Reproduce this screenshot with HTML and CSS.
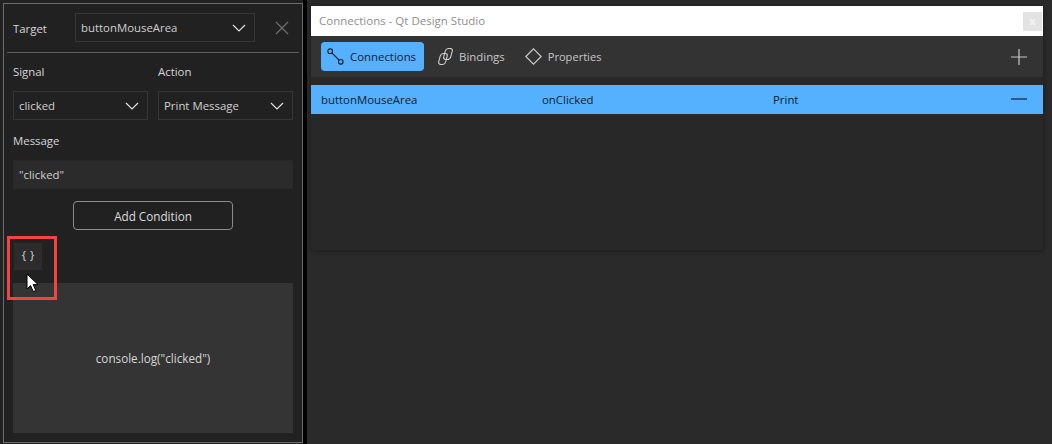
FILE: index.html
```html
<!DOCTYPE html>
<html lang="en">
<head>
<meta charset="utf-8">
<title>Connections - Qt Design Studio</title>
<link rel="stylesheet" href="styles.css">
</head>
<body>
<div class="stage">
  <aside class="side">
    <div class="panel">
      <div class="target-row">
        <span class="target-label">Target</span>
        <div class="select pick target-select"><span>buttonMouseArea</span>
          <svg class="chev" viewBox="0 0 14 8"><path d="M1 1l6 6 6-6"/></svg></div>
        <svg class="close" viewBox="0 0 14 14"><path d="M1 1l12 12M13 1L1 13"/></svg>
      </div>
      <div class="form">
        <div class="two">
          <div class="field">
            <div class="label">Signal</div>
            <div class="select pick"><span>clicked</span><svg class="chev" viewBox="0 0 14 8"><path d="M1 1l6 6 6-6"/></svg></div>
          </div>
          <div class="field">
            <div class="label">Action</div>
            <div class="select pick"><span>Print Message</span><svg class="chev" viewBox="0 0 14 8"><path d="M1 1l6 6 6-6"/></svg></div>
          </div>
        </div>
        <div class="label message-label">Message</div>
        <div class="input">"clicked"</div>
        <div class="btn-row"><div class="add-btn">Add Condition</div></div>
        <div class="code-btn">{ }</div>
        <div class="code">console.log("clicked")</div>
      </div>
    </div>
    <div class="highlight"></div>
    <svg class="cursor" viewBox="0 0 13 20"><path d="M1 1v15l3.6-3.4 2.6 6 2.6-1.1-2.6-5.9H12z"/></svg>
  </aside>
  <main class="right">
    <section class="window">
      <header class="titlebar">
        <span class="title">Connections - Qt Design Studio</span>
        <div class="win-close">x</div>
      </header>
      <nav class="toolbar">
        <div class="tab active">
          <svg class="tab-icon" viewBox="0 0 17 17"><circle cx="3.2" cy="3.2" r="2.3"/><circle cx="13.8" cy="13.8" r="2.3"/><path d="M5 5l7 7"/></svg>
          <span>Connections</span>
        </div>
        <div class="tab bindings">
          <svg class="tab-icon" viewBox="0 0 17 17"><rect x="5.400" y="5.500" width="7" height="11" rx="2.800" transform="skewX(-15)"/><rect x="9.100" y=".5" width="7" height="11" rx="2.800" transform="skewX(-15)"/></svg>
          <span>Bindings</span>
        </div>
        <div class="tab">
          <svg class="tab-icon" viewBox="0 0 17 17"><path d="M8.500 .8 16.200 8.500 8.500 16.200 .8 8.500z"/></svg>
          <span class="tight">Properties</span>
        </div>
        <svg class="plus" viewBox="0 0 16 16"><path d="M8 0v16M0 8h16"/></svg>
      </nav>
      <div class="list">
        <div class="row">
          <span>buttonMouseArea</span>
          <span>onClicked</span>
          <span>Print</span>
          <svg class="minus" viewBox="0 0 16 2"><path d="M0 1h16"/></svg>
        </div>
      </div>
    </section>
  </main>
</div>
</body>
</html>
```

FILE: styles.css
```css
* { box-sizing: border-box; }
html, body { margin: 0; height: 100%; overflow: hidden; }
body {
  background: #2a2a2a;
  font-family: "Open Sans", "Noto Sans", "Liberation Sans", sans-serif;
  font-size: 11.4px;
  line-height: 16px;
  color: #d6d6d6;
}
.stage { display: flex; width: 1052px; height: 444px; }

.side {
  position: relative;
  flex: 0 0 307px;
  padding: 3px 0 1px 3px;
  background: #222;
  border-right: 4px solid #000;
}
.panel {
  height: 440px;
  width: 300px;
  background: #212121;
  border: 1px solid #6b6b6b;
}
.target-row {
  display: flex;
  align-items: center;
  height: 49px;
  margin: 0 3px;
  padding: 0 0 1px 6px;
  border-bottom: 1px solid #5c5c5c;
}
.target-label { width: 62px; padding-top: 2px; }
.select {
  display: flex;
  align-items: center;
  justify-content: space-between;
  height: 29px;
  padding: 0 8px 0 5px;
  border: 1px solid #363636;
  color: #d0d0d0;
}
.target-select { width: 180px; }
.pick { padding-top: 1px; }
.chev { width: 14px; height: 8px; fill: none; stroke: #e0e0e0; stroke-width: 1.2; }
.close { width: 14px; height: 14px; margin-left: 20px; fill: none; stroke: #6e6e6e; stroke-width: 1.2; }

.form { padding: 0 9px; }
.two { display: flex; gap: 10px; }
.field { flex: 0 0 135px; }
.label { height: 38px; padding-top: 11px; }
.message-label { height: 40px; padding-top: 13px; }
.input {
  height: 29px;
  padding: 6px 5px;
  background: #2b2b2b;
  color: #d0d0d0;
  border: 1px solid #282828;
}
.btn-row { display: flex; justify-content: center; margin-top: 12px; }
.add-btn {
  width: 160px;
  height: 29px;
  padding-top: 6px;
  font-size: 11.7px;
  text-align: center;
  border: 1px solid #8c8c8c;
  border-radius: 4px;
  color: #dcdcdc;
}
.code-btn {
  width: 28px;
  height: 27px;
  margin: 13px 0 13px 1px;
  line-height: 24px;
  text-align: center;
  background: #2c2c2c;
  color: #d8d8d8;
  font-size: 11.5px;
  word-spacing: 1px;
}
.code {
  display: flex;
  align-items: center;
  justify-content: center;
  height: 150px;
  background: #343434;
  color: #d6d6d6;
  font-size: 11.7px;
}
.highlight {
  position: absolute;
  left: 7px;
  top: 236px;
  width: 50px;
  height: 64px;
  border: 3px solid #f44343;
}
.cursor {
  position: absolute;
  left: 26px;
  top: 273px;
  width: 13px;
  height: 20px;
  fill: #fff;
  stroke: #000;
  stroke-width: 1;
}

.right { flex: 1; padding: 6px 9px 0 4px; }
.window {
  height: 244px;
  background: #282828;
  box-shadow: 0 1px 5px rgba(0, 0, 0, .35);
}
.titlebar {
  display: flex;
  align-items: center;
  justify-content: space-between;
  height: 30px;
  padding: 0 1px 0 8px;
  background: #fff;
}
.title { color: #8f8f8f; font-size: 11.5px; }
.win-close {
  width: 19px;
  height: 19px;
  line-height: 17px;
  text-align: center;
  background: #e3e3e3;
  color: #f4f4f4;
  font-weight: 700;
  font-size: 11px;
}
.toolbar {
  display: flex;
  align-items: center;
  height: 41px;
  padding: 0 16px 0 10px;
  background: #333;
}
.tab {
  display: flex;
  align-items: center;
  gap: 6px;
  height: 29px;
  padding: 1px 6px 0;
  margin-right: 7px;
  margin-top: -1px;
  border-radius: 4px;
  color: #c6c6c6;
}
.tab.active { padding: 1px 8px 0 6px; background: #55b1fd; color: #102030; }
.tab.bindings { gap: 5px; margin-right: 8px; }
.tight { font-size: 11.1px; }
.tab-icon { width: 17px; height: 17px; fill: none; stroke: #d0d0d0; stroke-width: 1.1; margin-top: -1px; }
.tab.active .tab-icon { stroke: #0f2030; }
.plus { width: 16px; height: 16px; margin-left: auto; stroke: #c8c8c8; stroke-width: 1.2; }
.list { padding-top: 8px; }
.row {
  display: grid;
  grid-template-columns: 221px 231px 1fr 16px;
  align-items: center;
  height: 29px;
  padding: 1px 16px 0 10px;
  background: #55b1fd;
  color: #102030;
}
.minus { width: 16px; height: 2px; stroke: #102030; stroke-width: 1.2; margin-top: -2px; }
```
